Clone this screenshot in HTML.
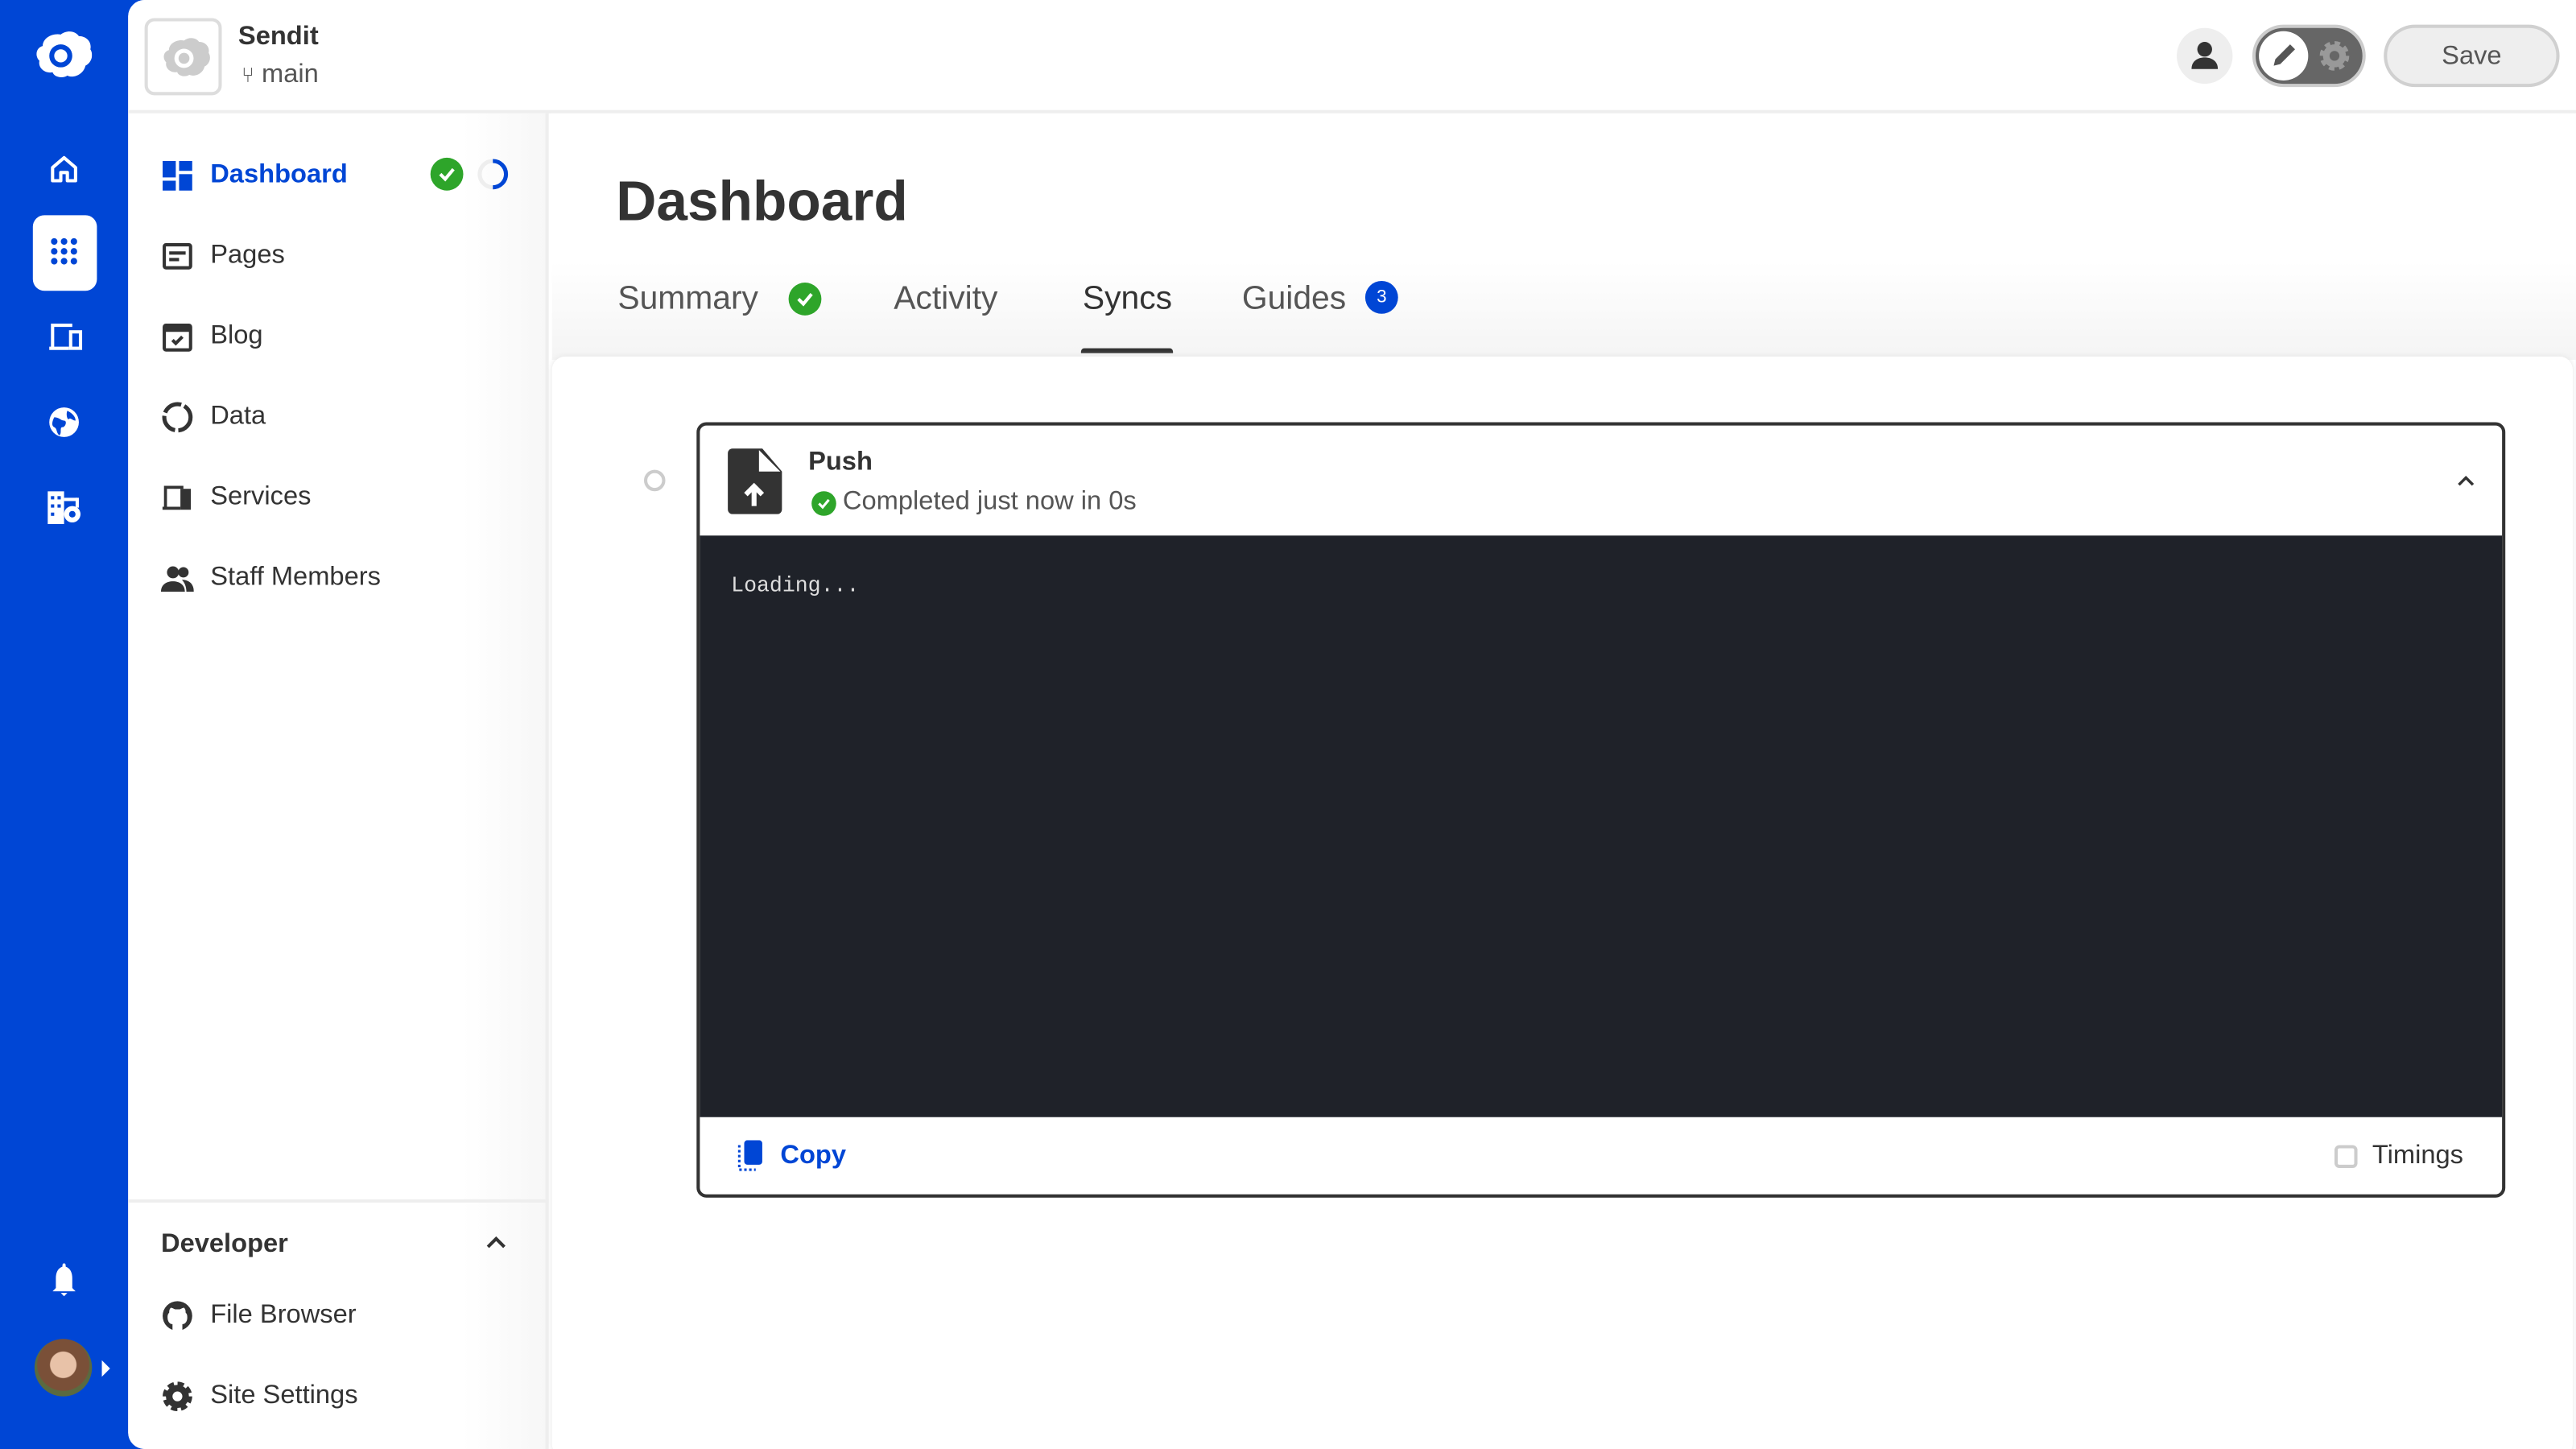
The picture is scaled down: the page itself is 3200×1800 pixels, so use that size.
<!DOCTYPE html>
<html><head><meta charset="utf-8"><style>
*{box-sizing:border-box;margin:0;padding:0}
html,body{width:3200px;height:1800px;overflow:hidden;background:#0046d5}
#s{width:1568px;height:882px;transform:scale(2.0408);transform-origin:0 0;position:relative;font-family:"Liberation Sans",sans-serif;color:#333}
.a{position:absolute}
.rail{left:0;top:0;width:78px;height:882px;background:#0046d5}
.panel{left:78px;top:0;width:1490px;height:882px;background:#fff;border-radius:10px 0 0 10px;overflow:hidden}
.hdr{left:0;top:0;width:1490px;height:69px;border-bottom:2px solid #eee;background:#fff}
.side{left:0;top:69px;width:256px;height:813px;border-right:2px solid #eee;background:linear-gradient(90deg,#fff 80%,#f7f7f7)}
.item{position:absolute;left:20px;font-size:16px;color:#333;display:flex;align-items:center;height:24px}
.item svg{width:20px;height:20px;margin-right:10px}
.tab{position:absolute;top:171px;font-size:20px;color:#555}
</style></head><body><div id="s">
<div class="a rail">
 <svg class="a" style="left:18px;top:19px" width="38" height="30" viewBox="0 0 38 30"><path fill="#fff" d="M19 2c4-3 9-2 11 1 5 0 8 4 7 8 2 3 1 8-3 10-1 5-7 8-11 6-3 2-8 1-9-2-5 1-9-3-8-7-3-3-2-8 2-9 0-5 6-8 11-7z"/><circle cx="19" cy="15" r="7" fill="#0046d5"/><circle cx="19" cy="15" r="4" fill="#fff"/></svg>
 <svg class="a" style="left:29px;top:93px" width="20" height="20" viewBox="0 0 20 20"><path d="M3 9l7-6 7 6v8h-5v-5h-4v5H3z" fill="none" stroke="#fff" stroke-width="2" stroke-linejoin="round"/></svg>
 <div class="a" style="left:20px;top:131px;width:39px;height:46px;background:#fff;border-radius:7px"></div>
 <svg class="a" style="left:31px;top:145px" width="16" height="16" viewBox="0 0 16 16" fill="#0046d5"><circle cx="2" cy="2" r="2"/><circle cx="8" cy="2" r="2"/><circle cx="14" cy="2" r="2"/><circle cx="2" cy="8" r="2"/><circle cx="8" cy="8" r="2"/><circle cx="14" cy="8" r="2"/><circle cx="2" cy="14" r="2"/><circle cx="8" cy="14" r="2"/><circle cx="14" cy="14" r="2"/></svg>
 <svg class="a" style="left:29px;top:196px" width="22" height="18" viewBox="0 0 22 18"><path d="M3 16V2h12M1 16h12" stroke="#fff" stroke-width="2" fill="none"/><rect x="14" y="6" width="6" height="10" fill="none" stroke="#fff" stroke-width="2"/></svg>
 <svg class="a" style="left:29px;top:247px" width="20" height="20" viewBox="0 0 20 20"><circle cx="10" cy="10" r="9" fill="#fff"/><path d="M4 7c3 0 4 2 6 2s1 4-1 4 0 4-2 5c-2-2-1-4-3-5-2-1-1-4 0-6zM12 3c2 1 5 3 5 6-2 0-3-2-4-1s-2-3-1-5z" fill="#0046d5"/></svg>
 <svg class="a" style="left:29px;top:299px" width="22" height="20" viewBox="0 0 22 20" fill="#fff"><rect x="0" y="0" width="10" height="20"/><rect x="10" y="4" width="8" height="2"/><rect x="17" y="4" width="2" height="6"/><circle cx="15" cy="14" r="5"/><circle cx="15" cy="14" r="2" fill="#0046d5"/><rect x="2" y="3" width="2" height="2" fill="#0046d5"/><rect x="6" y="3" width="2" height="2" fill="#0046d5"/><rect x="2" y="8" width="2" height="2" fill="#0046d5"/><rect x="6" y="8" width="2" height="2" fill="#0046d5"/><rect x="2" y="13" width="2" height="2" fill="#0046d5"/></svg>
 <svg class="a" style="left:30px;top:768px" width="18" height="22" viewBox="0 0 18 22"><path d="M9 1c-1 0-1 1-1 2-3 1-4 4-4 7v6l-2 2h14l-2-2v-6c0-3-1-6-4-7 0-1 0-2-1-2zM7 19h4l-2 2z" fill="#fff"/></svg>
 <div class="a" style="left:21px;top:815px;width:35px;height:35px;border-radius:50%;background:radial-gradient(circle at 50% 45%,#e8c2a8 0 30%,#7a5038 32% 60%,#5a6a40 62%)"></div>
 <div class="a" style="left:62px;top:828px;width:0;height:0;border-left:5px solid #fff;border-top:5px solid transparent;border-bottom:5px solid transparent"></div>
</div>
<div class="a panel">
 <div class="a hdr">
  <div class="a" style="left:10px;top:11px;width:47px;height:47px;border:2px solid #ddd;border-radius:6px"></div>
  <svg class="a" style="left:18px;top:23px" width="32" height="25" viewBox="0 0 38 30"><path fill="#ccc" d="M19 2c4-3 9-2 11 1 5 0 8 4 7 8 2 3 1 8-3 10-1 5-7 8-11 6-3 2-8 1-9-2-5 1-9-3-8-7-3-3-2-8 2-9 0-5 6-8 11-7z"/><circle cx="19" cy="15" r="7" fill="#fff"/><circle cx="19" cy="15" r="4" fill="#ccc"/></svg>
  <div class="a" style="left:67px;top:14px;font-size:16px;font-weight:bold;color:#333">Sendit</div>
  <div class="a" style="left:69px;top:37px;font-size:16px;color:#555"><span style="font-size:13px">⑂</span> main</div>
  <div class="a" style="left:1247px;top:17px;width:34px;height:34px;border-radius:50%;background:#eee"></div>
  <svg class="a" style="left:1255px;top:24px" width="18" height="20" viewBox="0 0 18 20" fill="#333"><circle cx="9" cy="6" r="4.5"/><path d="M1 18c0-5 4-7 8-7s8 2 8 7z"/></svg>
  <div class="a" style="left:1293px;top:15px;width:69px;height:38px;border-radius:19px;background:#666;border:2px solid #ccc"></div>
  <div class="a" style="left:1297px;top:19px;width:30px;height:30px;border-radius:50%;background:#fff"></div>
  <svg class="a" style="left:1303px;top:25px" width="18" height="18" viewBox="0 0 18 18"><path d="M3 15l1-4 9-9 3 3-9 9z" fill="#555"/></svg>
  <svg class="a" style="left:1333px;top:24px" width="20" height="20" viewBox="0 0 20 20"><circle cx="10" cy="10" r="7" fill="#999" stroke="#999" stroke-width="4" stroke-dasharray="3 2.5"/><circle cx="10" cy="10" r="3" fill="#666"/></svg>
  <div class="a" style="left:1373px;top:15px;width:107px;height:38px;border-radius:19px;background:#eee;border:2px solid #d0d0d0;text-align:center;line-height:36px;font-size:16px;color:#555">Save</div>
 </div>
 <div class="a side">
  <div class="item" style="top:26px;color:#0046d5;font-weight:bold"><svg viewBox="0 0 20 20" fill="#0046d5"><rect x="1" y="1" width="8" height="10"/><rect x="11" y="1" width="8" height="6"/><rect x="1" y="13" width="8" height="6"/><rect x="11" y="9" width="8" height="10"/></svg>Dashboard</div>
  <div class="a" style="left:184px;top:27px;width:20px;height:20px;border-radius:50%;background:#2ea52a"></div>
  <svg class="a" style="left:188px;top:31px" width="12" height="12" viewBox="0 0 12 12"><path d="M2 6l3 3 5-6" stroke="#fff" stroke-width="2" fill="none"/></svg>
  <svg class="a" style="left:212px;top:27px" width="20" height="20" viewBox="0 0 20 20"><circle cx="10" cy="10" r="8" stroke="#eee" stroke-width="2.5" fill="none"/><path d="M10 2a8 8 0 0 1 0 16" stroke="#0046d5" stroke-width="2.5" fill="none"/></svg>
  <div class="item" style="top:75px"><svg viewBox="0 0 20 20"><rect x="2" y="3" width="16" height="14" rx="1" fill="none" stroke="#333" stroke-width="2"/><path d="M5 8h10M5 12h6" stroke="#333" stroke-width="2"/></svg>Pages</div>
  <div class="item" style="top:124px"><svg viewBox="0 0 20 20"><rect x="2" y="3" width="16" height="15" rx="1" fill="none" stroke="#333" stroke-width="2"/><rect x="2" y="3" width="16" height="4" fill="#333"/><path d="M7 12l2 2 4-4" stroke="#333" stroke-width="2" fill="none"/></svg>Blog</div>
  <div class="item" style="top:173px"><svg viewBox="0 0 20 20"><circle cx="10" cy="10" r="8" fill="none" stroke="#333" stroke-width="2.5" stroke-dasharray="12 2"/></svg>Data</div>
  <div class="item" style="top:222px"><svg viewBox="0 0 22 18"><path d="M3 16V2h12M1 16h12" stroke="#333" stroke-width="2" fill="none"/><rect x="13" y="3" width="7" height="14" fill="#333"/></svg>Services</div>
  <div class="item" style="top:271px"><svg viewBox="0 0 22 18" fill="#333"><circle cx="8" cy="5" r="4"/><circle cx="15" cy="5" r="3.5"/><path d="M0 18c0-5 4-7 8-7s8 2 8 7zM14 10c4 0 8 2 8 8h-5c0-3-1-6-3-8z"/></svg>Staff Members</div>
  <div class="a" style="left:0;top:661px;width:256px;border-top:2px solid #eee"></div>
  <div class="a" style="left:20px;top:680px;font-size:16px;font-weight:bold">Developer</div>
  <svg class="a" style="left:217px;top:682px" width="14" height="10" viewBox="0 0 14 10"><path d="M2 8l5-5 5 5" stroke="#333" stroke-width="2" fill="none"/></svg>
  <div class="item" style="top:720px"><svg viewBox="0 0 20 20"><circle cx="10" cy="10" r="9" fill="#333"/><path d="M7 19v-4c-2 0-3-2-3-4 0-1 0-2 1-3 0-1 0-2 1-3 1 0 2 1 3 1h2c1 0 2-1 3-1 1 1 1 2 1 3 1 1 1 2 1 3 0 2-1 4-3 4v4z" fill="#fff"/></svg>File Browser</div>
  <div class="item" style="top:769px"><svg viewBox="0 0 20 20"><circle cx="10" cy="10" r="7" fill="#333" stroke="#333" stroke-width="4" stroke-dasharray="3.5 2"/><circle cx="10" cy="10" r="3" fill="#fff"/></svg>Site Settings</div>
 </div>
 <div class="a" style="left:258px;top:69px;width:1232px;height:150px;background:linear-gradient(#fff 60%,#f4f4f4)"></div>
 <div class="a" style="left:297px;top:104px;font-size:34px;font-weight:bold;color:#333">Dashboard</div>
 <div class="tab" style="left:298px">Summary</div>
 <div class="a" style="left:402px;top:172px;width:20px;height:20px;border-radius:50%;background:#2ea52a"></div>
 <svg class="a" style="left:406px;top:176px" width="12" height="12" viewBox="0 0 12 12"><path d="M2 6l3 3 5-6" stroke="#fff" stroke-width="2" fill="none"/></svg>
 <div class="tab" style="left:466px">Activity</div>
 <div class="tab" style="left:581px;color:#333">Syncs</div>
 <div class="a" style="left:580px;top:212px;width:56px;height:3px;background:#333;border-radius:2px 2px 0 0"></div>
 <div class="tab" style="left:678px">Guides</div>
 <div class="a" style="left:753px;top:171px;width:20px;height:20px;border-radius:50%;background:#0046d5;color:#fff;font-size:11px;text-align:center;line-height:20px">3</div>
 <div class="a" style="left:258px;top:217px;width:1230px;height:670px;background:#fff;border-radius:8px;box-shadow:0 0 3px #e5e5e5"></div>
 <div class="a" style="left:314px;top:286px;width:13px;height:13px;border-radius:50%;border:2px solid #ccc"></div>
 <div class="a" style="left:346px;top:257px;width:1101px;height:472px;border:2px solid #333;border-radius:6px;overflow:hidden;background:#fff">
  <svg class="a" style="left:17px;top:14px" width="33" height="40" viewBox="0 0 33 40"><path d="M3 0h18l12 14v23a3 3 0 0 1-3 3H3a3 3 0 0 1-3-3V3a3 3 0 0 1 3-3z" fill="#333"/><path d="M19 1v13h13z" fill="#fff"/><path d="M16 35V23M11 28l5-5 5 5" stroke="#fff" stroke-width="3" fill="none"/></svg>
  <div class="a" style="left:66px;top:14px;font-size:16px;font-weight:bold;color:#333">Push</div>
  <div class="a" style="left:68px;top:40px;width:15px;height:15px;border-radius:50%;background:#2ea52a"></div>
  <svg class="a" style="left:71px;top:43px" width="9" height="9" viewBox="0 0 12 12"><path d="M2 6l3 3 5-6" stroke="#fff" stroke-width="2" fill="none"/></svg>
  <div class="a" style="left:87px;top:38px;font-size:16px;color:#555">Completed just now in 0s</div>
  <svg class="a" style="left:1069px;top:29px" width="12" height="9" viewBox="0 0 14 10"><path d="M2 8l5-5 5 5" stroke="#333" stroke-width="2" fill="none"/></svg>
  <div class="a" style="left:0;top:67px;width:1101px;height:354px;background:#1f2229"></div>
  <div class="a" style="left:19px;top:90px;font-family:'Liberation Mono',monospace;font-size:13px;color:#ddd">Loading...</div>
  <svg class="a" style="left:22px;top:435px" width="18" height="20" viewBox="0 0 18 20"><rect x="5" y="0" width="11" height="15" rx="2" fill="#0046d5"/><path d="M2 3v15h10" stroke="#0046d5" stroke-width="1.5" stroke-dasharray="1.5 1.5" fill="none"/></svg>
  <div class="a" style="left:49px;top:436px;font-size:16px;font-weight:bold;color:#0046d5">Copy</div>
  <div class="a" style="left:995px;top:438px;width:14px;height:14px;border:2px solid #ccc;border-radius:3px"></div>
  <div class="a" style="left:1018px;top:436px;font-size:16px;color:#333">Timings</div>
 </div>
</div>
</div></body></html>
